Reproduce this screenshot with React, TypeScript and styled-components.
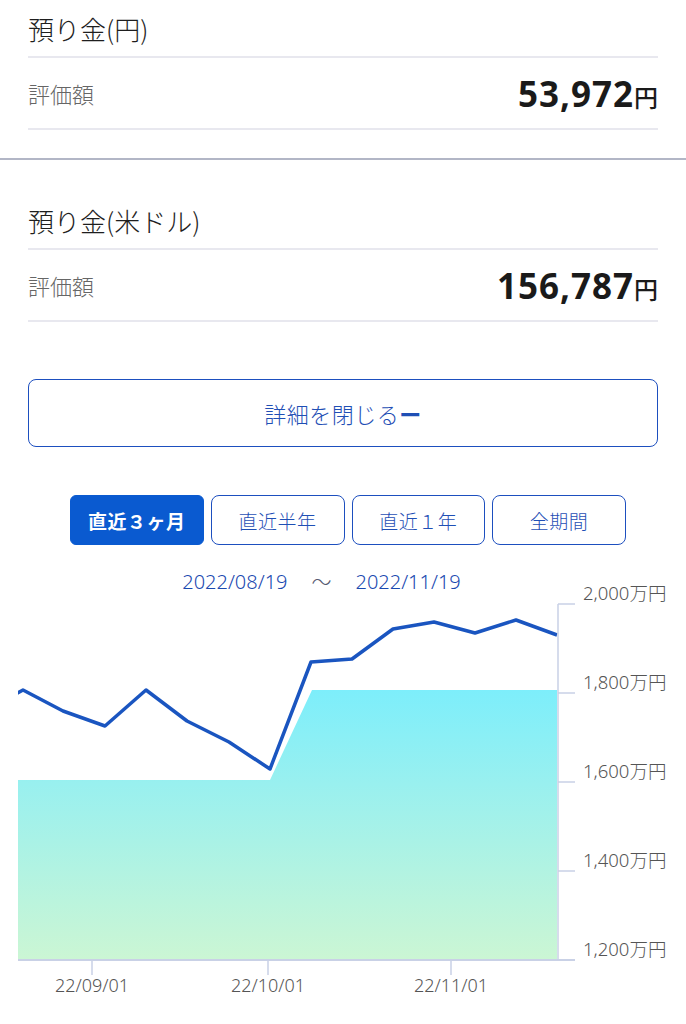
import React from "react";
import styled, { createGlobalStyle } from "styled-components";

const GlobalStyle = createGlobalStyle`
  body {
    margin: 0;
    background: #ffffff;
    font-family: "Noto Sans CJK JP", "Noto Sans", sans-serif;
  }
`;

const Page = styled.div`
  width: 686px;
  display: flex;
  flex-direction: column;
  padding-bottom: 14px;
`;

const Section = styled.section<{ $top: number }>`
  padding: ${(p) => p.$top}px 28px 0 28px;
`;

const TitleRow = styled.div`
  height: 58px;
  box-sizing: border-box;
  display: flex;
  align-items: center;
  font-size: 26px;
  font-weight: 300;
  color: #1e1e1e;
  border-bottom: 2px solid #e8e8ef;
`;

const ValueRow = styled.div`
  height: 72px;
  box-sizing: border-box;
  display: flex;
  align-items: center;
  justify-content: space-between;
  border-bottom: 2px solid #e8e8ef;
`;

const Label = styled.span`
  font-size: 22px;
  font-weight: 300;
  color: #666666;
`;

const Amount = styled.span`
  font-family: "Noto Sans", "Liberation Sans", sans-serif;
  font-weight: 700;
  font-size: 35px;
  color: #1a1a1a;
  letter-spacing: 1px;
  display: flex;
  align-items: baseline;
`;

const Yen = styled.span`
  font-family: "Noto Sans CJK JP", sans-serif;
  font-size: 24px;
  font-weight: 500;
  letter-spacing: 0;
`;

const ThickRule = styled.hr`
  margin: 28px 0 0 0;
  border: none;
  height: 2px;
  background: #b2b6c6;
`;

const CloseButton = styled.button`
  margin: 57px 28px 0 28px;
  height: 68px;
  border: 1.5px solid #1d4fbf;
  border-radius: 8px;
  background: #ffffff;
  color: #1f4fb5;
  font-family: "Noto Sans CJK JP", sans-serif;
  font-size: 22px;
  font-weight: 300;
  letter-spacing: 0.5px;
`;

const Dash = styled.span`
  font-weight: 700;
`;

const Tabs = styled.div`
  margin-top: 48px;
  padding: 0 60px 0 70px;
  display: flex;
  gap: 7px;
`;

const Tab = styled.button<{ $active?: boolean }>`
  flex: 1;
  height: 50px;
  border-radius: ${(p) => (p.$active ? "6px" : "8px")};
  border: 1.5px solid ${(p) => (p.$active ? "#0a5ad0" : "#1d4fbf")};
  background: ${(p) => (p.$active ? "#0a5ad0" : "#ffffff")};
  color: ${(p) => (p.$active ? "#ffffff" : "#1f4fb5")};
  font-family: "Noto Sans CJK JP", sans-serif;
  font-weight: ${(p) => (p.$active ? 700 : 300)};
  font-size: 19px;
  letter-spacing: 0.5px;
`;

const DateRow = styled.div`
  margin-top: 24px;
  height: 24px;
  padding: 0 61px 0 18px;
  display: flex;
  justify-content: center;
  align-items: center;
  gap: 24px;
  font-family: "Noto Sans", "Liberation Sans", sans-serif;
  font-weight: 300;
  font-size: 20px;
  color: #1a49b0;
`;

const Tilde = styled.span`
  font-family: "Noto Sans CJK JP", sans-serif;
  color: #555a70;
`;

const ChartSvg = styled.svg`
  display: block;
  overflow: visible;
  margin-top: 1px;
  font-family: "Noto Sans", "Noto Sans CJK JP", sans-serif;
  font-weight: 300;
`;

const Y0 = 594;
const yTicks = [
  { v: "2,000万円", y: 604 },
  { v: "1,800万円", y: 693 },
  { v: "1,600万円", y: 782 },
  { v: "1,400万円", y: 871 },
  { v: "1,200万円", y: 960 },
];
const xTicks = [
  { v: "22/09/01", x: 92 },
  { v: "22/10/01", x: 268 },
  { v: "22/11/01", x: 451 },
];
const linePts: [number, number][] = [
  [8, 698],
  [23, 690],
  [63, 711],
  [105, 726],
  [146, 690],
  [187, 721],
  [229, 742],
  [270, 769],
  [311, 662],
  [352, 659],
  [393, 629],
  [434, 622],
  [475, 633],
  [516, 620],
  [557, 635],
];

function Chart() {
  const y = (v: number) => v - Y0;
  const line = linePts.map(([px, py]) => `${px},${y(py)}`).join(" ");
  const area = `M18 ${y(780)} L270 ${y(780)} L312 ${y(690)} L557 ${y(690)} L557 ${y(959)} L18 ${y(959)} Z`;
  return (
    <ChartSvg width={686} height={410} viewBox="0 0 686 410">
      <defs>
        <linearGradient id="fillGrad" x1="0" y1={y(690)} x2="0" y2={y(959)} gradientUnits="userSpaceOnUse">
          <stop offset="0" stopColor="#7deefb" />
          <stop offset="0.35" stopColor="#99f0ef" />
          <stop offset="1" stopColor="#cbf6d4" />
        </linearGradient>
        <clipPath id="plot">
          <rect x={18} y={-20} width={540} height={400} />
        </clipPath>
      </defs>
      <path d={area} fill="url(#fillGrad)" />
      <polyline
        points={line}
        fill="none"
        stroke="#1a55c0"
        strokeWidth={3.5}
        strokeLinejoin="round"
        clipPath="url(#plot)"
      />
      <line x1={558} y1={y(604)} x2={558} y2={y(960)} stroke="#c9d1e6" strokeWidth={1.5} />
      <line x1={18} y1={y(960)} x2={575} y2={y(960)} stroke="#c9d1e6" strokeWidth={2} />
      {yTicks.map((t) => (
        <g key={t.v}>
          <line x1={558} y1={y(t.y)} x2={575} y2={y(t.y)} stroke="#c9d1e6" strokeWidth={1.5} />
          <text x={583} y={y(t.y) - 4} fontSize={18.5} fill="#555555">
            {t.v}
          </text>
        </g>
      ))}
      {xTicks.map((t) => (
        <g key={t.v}>
          <line x1={t.x} y1={y(960)} x2={t.x} y2={y(975)} stroke="#c9d1e6" strokeWidth={1.5} />
          <text x={t.x} y={y(992)} fontSize={18} fill="#555555" textAnchor="middle">
            {t.v}
          </text>
        </g>
      ))}
    </ChartSvg>
  );
}

function Deposit({ title, amount, top }: { title: string; amount: string; top: number }) {
  return (
    <Section $top={top}>
      <TitleRow>{title}</TitleRow>
      <ValueRow>
        <Label>評価額</Label>
        <Amount>
          {amount}
          <Yen>円</Yen>
        </Amount>
      </ValueRow>
    </Section>
  );
}

export default function App() {
  const tabs = ["直近３ヶ月", "直近半年", "直近１年", "全期間"];
  return (
    <>
      <GlobalStyle />
      <Page>
        <Deposit title="預り金(円)" amount="53,972" top={0} />
        <ThickRule />
        <Deposit title="預り金(米ドル)" amount="156,787" top={32} />
        <CloseButton>
          詳細を閉じる<Dash>ー</Dash>
        </CloseButton>
        <Tabs>
          {tabs.map((t, i) => (
            <Tab key={t} $active={i === 0}>
              {t}
            </Tab>
          ))}
        </Tabs>
        <DateRow>
          <span>2022/08/19</span>
          <Tilde>〜</Tilde>
          <span>2022/11/19</span>
        </DateRow>
        <Chart />
      </Page>
    </>
  );
}
